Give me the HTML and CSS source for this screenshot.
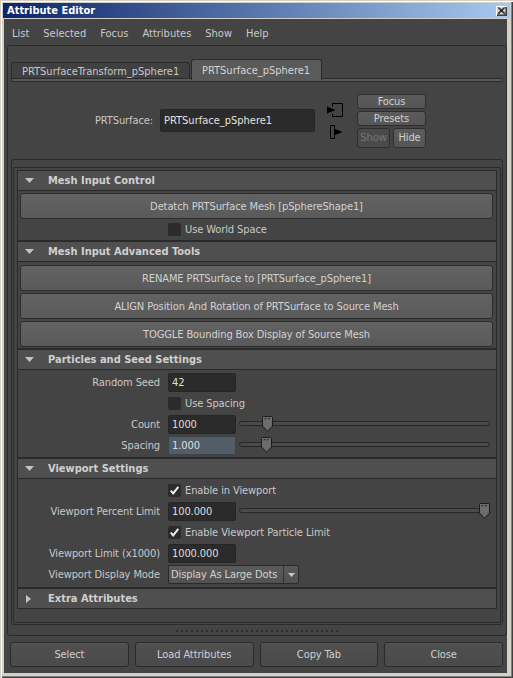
FILE: index.html
```html
<!DOCTYPE html>
<html>
<head>
<meta charset="utf-8">
<title>Attribute Editor</title>
<link rel="stylesheet" href="styles.css">
</head>
<body>
<div class="titlebar">
  <span class="title">Attribute Editor</span>
  <span class="closebtn"><svg width="9" height="8" viewBox="0 0 9 8"><path d="M1 0.5 L8 7.5 M2 0.5 L8 6.5 M8 0.5 L1 7.5 M7 0.5 L1 6.5" stroke="#000" stroke-width="1" fill="none"/></svg></span>
</div>
<div class="main">
  <div class="menubar">
    <span class="menu">List</span>
    <span class="menu">Selected</span>
    <span class="menu">Focus</span>
    <span class="menu">Attributes</span>
    <span class="menu">Show</span>
    <span class="menu">Help</span>
  </div>
  <div class="tabframe">
    <div class="tabs">
      <div class="tab t1">PRTSurfaceTransform_pSphere1</div>
      <div class="tab t2 active">PRTSurface_pSphere1</div>
    </div>
    <div class="tabbar"></div>
    <div class="nodehead">
      <div class="nodelabel">PRTSurface:</div>
      <div class="nodefield">PRTSurface_pSphere1</div>
      <div class="conn">
        <svg width="18" height="14" viewBox="0 0 18 14"><path d="M5.5 3.5 V0.5 H15.5 V13.5 H5.5 V10.5" stroke="#000" fill="none"/><polygon points="0,3.5 8.5,7 0,10.5" fill="#000"/></svg>
        <svg width="18" height="14" viewBox="0 0 18 14"><path d="M7.5 3.5 V0.5 H3.5 V13.5 H7.5 V10.5" stroke="#000" fill="none"/><polygon points="7,3.5 15.5,7 7,10.5" fill="#000"/></svg>
      </div>
      <div class="hbtns">
        <div class="btn">Focus</div>
        <div class="btn">Presets</div>
        <div class="hrow"><div class="btn disabled">Show</div><div class="btn">Hide</div></div>
      </div>
    </div>
    <div class="scroll">
      <div class="inner">
        <div class="sec">
          <div class="sec-head"><span class="tri"><svg width="9" height="5" viewBox="0 0 9 5"><polygon points="0,0 9,0 4.5,5" fill="#c4c4c4"/></svg></span>Mesh Input Control</div>
          <div class="sec-body b1">
            <div class="wbtn">Detatch PRTSurface Mesh [pSphereShape1]</div>
            <div class="row"><span class="lbl"></span><span class="chk"></span><span class="chktxt">Use World Space</span></div>
          </div>
        </div>
        <div class="sec">
          <div class="sec-head"><span class="tri"><svg width="9" height="5" viewBox="0 0 9 5"><polygon points="0,0 9,0 4.5,5" fill="#c4c4c4"/></svg></span>Mesh Input Advanced Tools</div>
          <div class="sec-body b2">
            <div class="wbtn">RENAME PRTSurface to [PRTSurface_pSphere1]</div>
            <div class="wbtn">ALIGN Position And Rotation of PRTSurface to Source Mesh</div>
            <div class="wbtn">TOGGLE Bounding Box Display of Source Mesh</div>
          </div>
        </div>
        <div class="sec">
          <div class="sec-head"><span class="tri"><svg width="9" height="5" viewBox="0 0 9 5"><polygon points="0,0 9,0 4.5,5" fill="#c4c4c4"/></svg></span>Particles and Seed Settings</div>
          <div class="sec-body b3">
            <div class="row"><span class="lbl">Random Seed</span><span class="field">42</span></div>
            <div class="row"><span class="lbl"></span><span class="chk"></span><span class="chktxt">Use Spacing</span></div>
            <div class="row"><span class="lbl">Count</span><span class="field">1000</span>
              <div class="slider"><div class="track"></div><svg class="thumb th-count" width="11" height="16" viewBox="0 0 11 16"><path d="M1.5 0.5 H9.5 Q10.5 0.5 10.5 1.5 V10 L5.5 15.3 L0.5 10 V1.5 Q0.5 0.5 1.5 0.5 Z" fill="#6c6c6c" stroke="#1c1c1c"/><path d="M3 3.5 V2.5 H4.5 M6.5 3.5 V2.5 H8" stroke="#2a2a2a" fill="none"/></svg></div>
            </div>
            <div class="row"><span class="lbl">Spacing</span><span class="field keyed">1.000</span>
              <div class="slider"><div class="track"></div><svg class="thumb th-spacing" width="11" height="16" viewBox="0 0 11 16"><path d="M1.5 0.5 H9.5 Q10.5 0.5 10.5 1.5 V10 L5.5 15.3 L0.5 10 V1.5 Q0.5 0.5 1.5 0.5 Z" fill="#6c6c6c" stroke="#1c1c1c"/><path d="M3 3.5 V2.5 H4.5 M6.5 3.5 V2.5 H8" stroke="#2a2a2a" fill="none"/></svg></div>
            </div>
          </div>
        </div>
        <div class="sec">
          <div class="sec-head"><span class="tri"><svg width="9" height="5" viewBox="0 0 9 5"><polygon points="0,0 9,0 4.5,5" fill="#c4c4c4"/></svg></span>Viewport Settings</div>
          <div class="sec-body b4">
            <div class="row"><span class="lbl"></span><span class="chk on"><svg width="13" height="13" viewBox="0 0 13 13"><path d="M2.8 6.6 L5.2 9.4 L10.3 2.8" stroke="#eeeeee" stroke-width="2" fill="none"/></svg></span><span class="chktxt">Enable in Viewport</span></div>
            <div class="row"><span class="lbl">Viewport Percent Limit</span><span class="field">100.000</span>
              <div class="slider"><div class="track"></div><svg class="thumb th-vp" width="11" height="16" viewBox="0 0 11 16"><path d="M1.5 0.5 H9.5 Q10.5 0.5 10.5 1.5 V10 L5.5 15.3 L0.5 10 V1.5 Q0.5 0.5 1.5 0.5 Z" fill="#6c6c6c" stroke="#1c1c1c"/><path d="M3 3.5 V2.5 H4.5 M6.5 3.5 V2.5 H8" stroke="#2a2a2a" fill="none"/></svg></div>
            </div>
            <div class="row"><span class="lbl"></span><span class="chk on"><svg width="13" height="13" viewBox="0 0 13 13"><path d="M2.8 6.6 L5.2 9.4 L10.3 2.8" stroke="#eeeeee" stroke-width="2" fill="none"/></svg></span><span class="chktxt">Enable Viewport Particle Limit</span></div>
            <div class="row"><span class="lbl">Viewport Limit (x1000)</span><span class="field">1000.000</span></div>
            <div class="row"><span class="lbl">Viewport Display Mode</span>
              <div class="dropdown"><span class="ddtext">Display As Large Dots</span><span class="ddarrow"><svg width="7" height="4" viewBox="0 0 7 4"><polygon points="0,0 7,0 3.5,4" fill="#c8c8c8"/></svg></span></div>
            </div>
          </div>
        </div>
        <div class="sec collapsed">
          <div class="sec-head"><span class="tri"><svg width="5" height="8" viewBox="0 0 5 8"><polygon points="0,0 5,4 0,8" fill="#c4c4c4"/></svg></span>Extra Attributes</div>
        </div>
      </div>
    </div>
    <div class="splitter"><div class="dots"></div></div>
  </div>
  <div class="bottombar">
    <div class="bbtn">Select</div>
    <div class="bbtn">Load Attributes</div>
    <div class="bbtn">Copy Tab</div>
    <div class="bbtn">Close</div>
  </div>
</div>
</body>
</html>
```

FILE: styles.css
```css
html, body {
  margin: 0;
  padding: 0;
}
body {
  width: 513px;
  height: 678px;
  overflow: hidden;
  background: #d4d0c8;
  box-shadow: inset 1px 1px 0 #d4d0c8, inset 2px 2px 0 #ffffff, inset -1px -1px 0 #404040, inset -2px -2px 0 #808080;
  font-family: "DejaVu Sans Condensed", "DejaVu Sans", sans-serif;
  font-size: 11px;
  letter-spacing: -0.1px;
  color: #c8c8c8;
}

/* title bar */
.titlebar {
  margin: 3px 3px 0 3px;
  height: 15px;
  background: linear-gradient(90deg, #0a246a 0%, #a6caf0 100%);
  display: flex;
  align-items: center;
  justify-content: space-between;
  padding: 0 3px 0 4px;
}
.title {
  color: #ffffff;
  font-weight: bold;
  font-size: 11px;
  letter-spacing: 0;
}
.closebtn {
  width: 11px;
  height: 10px;
  box-sizing: border-box;
  background: #d4d0c8;
  box-shadow: inset 1px 1px 0 #ffffff, inset -1px -1px 0 #404040, inset -2px -2px 0 #808080;
  display: flex;
  align-items: center;
  justify-content: center;
}
.closebtn svg { display: block; }

/* main window body */
.main {
  margin: 1px 6px 5px 4px;
  height: 654px;
  background: #444444;
  display: flex;
  flex-direction: column;
}
.menubar {
  height: 26px;
  box-sizing: border-box;
  padding: 2px 0 0 8px;
  display: flex;
  align-items: center;
  gap: 14px;
  color: #cacaca;
  font-size: 11px;
  letter-spacing: 0;
}

.tabframe {
  margin-left: 3px;
  height: 591px;
  box-sizing: border-box;
  border: 1px solid #2b2b2b;
  border-radius: 3px;
  padding: 13px 3px 0 3px;
  display: flex;
  flex-direction: column;
}
.tabs {
  display: flex;
  align-items: flex-end;
  height: 20px;
  gap: 1px;
}
.tab {
  box-sizing: border-box;
  border: 1px solid #2b2b2b;
  border-bottom: none;
  border-radius: 3px 3px 0 0;
  display: flex;
  align-items: center;
  padding: 0 0 0 10px;
  color: #c8c8c8;
  font-size: 11px;
  letter-spacing: 0;
}
.t1 {
  width: 179px;
  height: 17px;
  background: #404040;
}
.t2 {
  width: 131px;
  height: 21px;
  margin-bottom: -1px;
  background: #5a5a5a;
  position: relative;
  z-index: 2;
  color: #d4d4d4;
}
.tabbar {
  height: 4px;
  margin-top: -1px;
  box-sizing: border-box;
  border: 1px solid #2b2b2b;
  border-radius: 2px;
  background: #5a5a5a;
}

.nodehead {
  height: 77px;
  display: flex;
  align-items: center;
}
.nodelabel {
  width: 142px;
  text-align: right;
  color: #c8c8c8;
}
.nodefield {
  margin-left: 7px;
  width: 155px;
  height: 23px;
  box-sizing: border-box;
  background: #2b2b2b;
  border: 1px solid #262626;
  border-radius: 2px;
  display: flex;
  align-items: center;
  padding-left: 3px;
  color: #e2e2e2;
  font-size: 11px;
  letter-spacing: 0;
}
.conn {
  margin-left: 12px;
  width: 18px;
  display: flex;
  flex-direction: column;
  gap: 8px;
}
.conn svg { display: block; }
.hbtns {
  margin-left: 12px;
  width: 69px;
  display: flex;
  flex-direction: column;
  gap: 2px;
}
.hrow {
  display: flex;
  gap: 3px;
}
.btn {
  height: 20px;
  flex: 1;
  box-sizing: border-box;
  border: 1px solid #2e2e2e;
  border-radius: 3px;
  background: linear-gradient(#5c5c5c, #555555);
  color: #d2d2d2;
  display: flex;
  align-items: center;
  justify-content: center;
}
.btn.disabled {
  background: #4a4a4a;
  color: #777777;
}

.scroll {
  height: 466px;
  box-sizing: border-box;
  border: 1px solid #2b2b2b;
  border-radius: 3px;
  padding: 7px 1px 1px 1px;
}
.inner {
  height: 100%;
  box-sizing: border-box;
  border: 1px solid #2b2b2b;
  border-radius: 2px;
  padding: 2px 3px;
}

.sec {
  border: 1px solid #2a2a2a;
}
.sec-head {
  height: 20px;
  box-sizing: border-box;
  border-bottom: 1px solid #2a2a2a;
  background: #4f4f4f;
  display: flex;
  align-items: center;
  font-weight: bold;
  letter-spacing: 0;
  color: #d0d0d0;
}
.sec.collapsed .sec-head {
  height: 19px;
  border-bottom: none;
}
.tri {
  width: 30px;
  flex: none;
  box-sizing: border-box;
  padding-left: 7px;
  display: flex;
  align-items: center;
}
.sec.collapsed .tri { padding-left: 8px; }
.tri svg { display: block; }

.sec-body {
  box-sizing: border-box;
  display: flex;
  flex-direction: column;
}
.b1 { height: 49px; padding-top: 2px; }
.b2 { height: 86px; padding-top: 3px; gap: 2px; }
.b3 { height: 87px; padding-top: 2px; }
.b4 { height: 108px; padding-top: 1px; }

.wbtn {
  height: 26px;
  flex: none;
  margin: 0 3px 0 2px;
  box-sizing: border-box;
  border: 1px solid #2c2c2c;
  border-radius: 3px;
  background: linear-gradient(#626262, #5a5a5a);
  color: #d2d2d2;
  display: flex;
  align-items: center;
  justify-content: center;
}

.row {
  height: 21px;
  flex: none;
  display: flex;
  align-items: center;
}
.lbl {
  width: 142px;
  flex: none;
  text-align: right;
  margin-right: 8px;
  color: #c8c8c8;
}
.field {
  width: 68px;
  height: 19px;
  flex: none;
  box-sizing: border-box;
  background: #2b2b2b;
  border: 1px solid #262626;
  border-radius: 2px;
  padding-left: 3px;
  display: flex;
  align-items: center;
  color: #dedede;
}
.field.keyed {
  background: #535d68;
  border-color: #3c434b;
}
.chk {
  width: 13px;
  height: 13px;
  flex: none;
  box-sizing: border-box;
  background: #2b2b2b;
  border-radius: 2px;
}
.chk svg { display: block; }
.chktxt {
  margin-left: 4px;
  color: #c8c8c8;
}

.slider {
  position: relative;
  margin-left: 3px;
  width: 251px;
  height: 21px;
  flex: none;
}
.track {
  margin-top: 7px;
  height: 5px;
  box-sizing: border-box;
  border: 1px solid #262626;
  border-radius: 3px;
  background: #4a4a4a;
}
.thumb {
  position: absolute;
  top: 2px;
  display: block;
}
.th-count { left: 23px; }
.th-spacing { left: 22px; }
.th-vp { left: 240px; }

.dropdown {
  width: 131px;
  height: 19px;
  box-sizing: border-box;
  border: 1px solid #2a2a2a;
  border-radius: 2px;
  background: linear-gradient(#5a5a5a, #515151);
  display: flex;
  align-items: center;
}
.ddtext {
  flex: 1;
  padding-left: 2px;
  color: #d2d2d2;
  white-space: nowrap;
}
.ddarrow {
  width: 15px;
  height: 100%;
  box-sizing: border-box;
  border-left: 1px solid #333333;
  display: flex;
  align-items: center;
  justify-content: center;
}
.ddarrow svg { display: block; }

.splitter {
  height: 9px;
  display: flex;
  justify-content: center;
  align-items: flex-start;
  padding-top: 5px;
  box-sizing: border-box;
}
.dots {
  width: 162px;
  height: 2px;
  background-image: repeating-linear-gradient(90deg, #2c2c2c 0, #2c2c2c 2px, transparent 2px, transparent 5px);
}

.bottombar {
  flex: 1;
  display: flex;
  gap: 6px;
  padding: 6px 4px 6px 6px;
  box-sizing: border-box;
}
.bbtn {
  flex: 1;
  height: 25px;
  box-sizing: border-box;
  border: 1px solid #2a2a2a;
  border-radius: 3px;
  background: linear-gradient(#505050, #4a4a4a);
  box-shadow: inset 0 1px 0 #575757;
  color: #cfcfcf;
  display: flex;
  align-items: center;
  justify-content: center;
}
```
